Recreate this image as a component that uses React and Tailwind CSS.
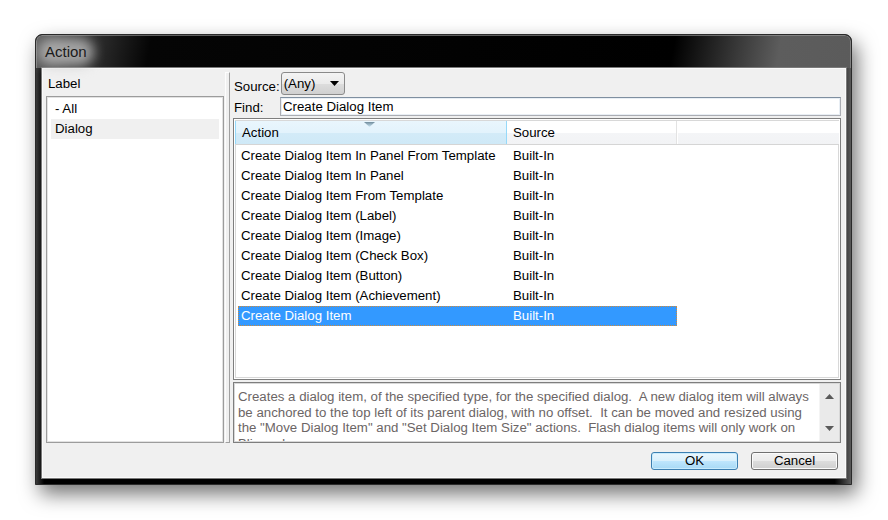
import React from 'react';

const ACTIONS = [
  'Create Dialog Item In Panel From Template',
  'Create Dialog Item In Panel',
  'Create Dialog Item From Template',
  'Create Dialog Item (Label)',
  'Create Dialog Item (Image)',
  'Create Dialog Item (Check Box)',
  'Create Dialog Item (Button)',
  'Create Dialog Item (Achievement)',
  'Create Dialog Item',
];

const DESCRIPTION = [
  'Creates a dialog item, of the specified type, for the specified dialog.  A new dialog item will always',
  'be anchored to the top left of its parent dialog, with no offset.  It can be moved and resized using',
  'the "Move Dialog Item" and "Set Dialog Item Size" actions.  Flash dialog items will only work on',
  'Blizzard.',
];

function ArrowUp() {
  return (
    <svg width="9" height="5" viewBox="0 0 9 5">
      <path d="M0 5 L4.5 0 L9 5 Z" fill="#5a5a5a" />
    </svg>
  );
}

function ArrowDown() {
  return (
    <svg width="9" height="5" viewBox="0 0 9 5">
      <path d="M0 0 L9 0 L4.5 5 Z" fill="#5a5a5a" />
    </svg>
  );
}

export default function App() {
  return (
    <div className="w-[888px] h-[520px] bg-white pt-[34px] pl-[35px] font-['Liberation_Sans',Arial,sans-serif] text-[13.25px] text-black">
      <div className="w-[817px] h-[451px] flex flex-col rounded-t-[7px] border border-[#2a2a2a] bg-[#0a0a0a] shadow-[5px_9px_20px_rgba(0,0,0,0.55)] overflow-hidden">
        {/* Title bar */}
        <div className="h-[33px] shrink-0 flex items-center pl-[8px] rounded-t-[6px] border-t border-l border-r border-[#9a9a9a]/60 bg-[linear-gradient(100deg,#5e5e5e_0%,#3c3c3c_5%,#050505_14%,#000_78%,#3a3a3a_86%,#5d5d5d_91%,#5b5b5b_100%)]">
          <span className="relative">
            <span className="absolute -inset-x-[7px] -inset-y-[3px] rounded-full bg-[#c4c4c4]/75 blur-[6px]" />
            <span className="relative text-[15px] text-[#1a1a1a]">Action</span>
          </span>
        </div>

        {/* Frame body */}
        <div className="flex-1 flex pl-[6px] pr-[5px] pb-[6px] bg-[linear-gradient(90deg,#3a3a3a_0%,#000_1%,#000_98%,#5a5a5a_100%)]">
          <div className="flex-1 flex flex-col bg-[#f0f0f0] border border-[#fafafa] shadow-[0_0_0_1px_#7a7a7a]">
            {/* Main split */}
            <div className="h-[374px] flex pt-[3px] pl-[3px] pr-[4px]">
              {/* Left pane */}
              <div className="w-[178px] flex flex-col">
                <div className="h-[24px] flex items-center pl-[2px]">Label</div>
                <div className="flex-1 bg-white border border-[#9c9c9c] shadow-[inset_0_0_0_1px_#e2e2e2] pt-[2px] px-[4px]">
                  <div className="h-[20px] flex items-center pl-[4px]">- All</div>
                  <div className="h-[20px] flex items-center pl-[4px] bg-[#f0f0f0]">Dialog</div>
                </div>
              </div>

              {/* Splitter */}
              <div className="ml-[1px] w-[5px] h-[371px] bg-[#f0f0f0] border border-[#a0a0a0] border-t-[#fdfdfd] border-l-[#fdfdfd]" />

              {/* Right pane */}
              <div className="ml-[3px] w-[608px] flex flex-col">
                <div className="h-[24px] flex items-start pl-[1px]">
                  <span className="mt-[5px]">Source:</span>
                  <div className="ml-[1px] w-[64px] h-[23px] flex items-center justify-between pl-[2px] pr-[5px] rounded-[3px] border border-[#8a8a8a] bg-[linear-gradient(180deg,#f4f4f4_0%,#ebebeb_50%,#dddddd_51%,#d0d0d0_100%)]">
                    <span>(Any)</span>
                    <svg width="9" height="5" viewBox="0 0 9 5">
                      <path d="M0 0 L9 0 L4.5 5 Z" fill="#000" />
                    </svg>
                  </div>
                </div>
                <div className="h-[21px] flex items-start pl-[1px]">
                  <span className="mt-[2px] w-[46px]">Find:</span>
                  <div className="mt-[1px] flex-1 h-[19px] flex items-center pl-[2px] bg-white border border-[#abadb3] border-t-[#7f8fa0] shadow-[inset_0_0_0_1px_#e8eef4]">
                    Create Dialog Item
                  </div>
                </div>

                {/* Grid */}
                <div className="mt-[1px] h-[262px] flex flex-col bg-white border border-[#7e7e7e] shadow-[inset_0_0_0_1px_#fff,inset_0_0_0_2px_#d8d8d8] px-[1px] pt-[2px]">
                  <div className="h-[24px] flex shrink-0 border-b border-[#d5d5d5]">
                    <div className="relative w-[272px] flex items-center pl-[6px] border-l border-r border-[#96d9f9] bg-[linear-gradient(180deg,#e9f6fd_0%,#e3f3fc_50%,#d3ebf8_51%,#cfe9f7_100%)]">
                      Action
                      <svg className="absolute left-[128px] top-[1px]" width="11" height="5" viewBox="0 0 11 5">
                        <defs>
                          <linearGradient id="sortArrow" x1="0" y1="0" x2="0" y2="1">
                            <stop offset="0" stopColor="#3c5e72" />
                            <stop offset="1" stopColor="#c4e3f3" />
                          </linearGradient>
                        </defs>
                        <path d="M0 0 L11 0 L5.5 5 Z" fill="url(#sortArrow)" opacity="0.7" />
                      </svg>
                    </div>
                    <div className="w-[170px] flex items-center pl-[6px] border-r border-[#e3e3e3] bg-[linear-gradient(180deg,#ffffff_0%,#ffffff_50%,#f4f5f7_51%,#f2f3f5_100%)]">
                      Source
                    </div>
                    <div className="flex-1 border-l border-white bg-[linear-gradient(180deg,#ffffff_0%,#ffffff_50%,#f4f5f7_51%,#f2f3f5_100%)]" />
                  </div>
                  <div className="flex flex-col pl-[3px] pt-[1px]">
                    {ACTIONS.map((a, i) => {
                      const selected = i === ACTIONS.length - 1;
                      return (
                        <div
                          key={a}
                          className={`w-[439px] h-[20px] flex items-center ${selected ? 'bg-[#3399ff] text-white border border-dotted border-[#d08a3a]' : ''}`}
                        >
                          <span className={`w-[269px] ${selected ? 'pl-[2px]' : 'pl-[3px]'}`}>{a}</span>
                          <span className={selected ? 'pl-[5px]' : 'pl-[6px]'}>Built-In</span>
                        </div>
                      );
                    })}
                  </div>
                </div>

                {/* Description */}
                <div className="mt-[2px] h-[61px] flex bg-white border border-[#7e7e7e] shadow-[inset_0_0_0_1px_#d8d8d8] p-[1px] overflow-hidden">
                  <div className="flex-1 pl-[3px] pt-[5px] text-[#6b6565] leading-[15.5px] whitespace-pre overflow-hidden">
                    {DESCRIPTION.map((line) => (
                      <div key={line}>{line}</div>
                    ))}
                  </div>
                  <div className="w-[20px] flex flex-col items-center justify-between py-[10px] bg-[#eaeaea] border-l border-[#f4f4f4]">
                    <ArrowUp />
                    <ArrowDown />
                  </div>
                </div>
              </div>
            </div>

            {/* Buttons */}
            <div className="flex-1 flex justify-end items-start pt-[9px] pr-[7px] gap-[13px]">
              <button className="w-[87px] h-[18px] flex items-center justify-center rounded-[3px] border border-[#3c7fb1] shadow-[inset_0_0_0_1px_#c9ecfd] bg-[linear-gradient(180deg,#eaf6fd_0%,#d9f0fc_50%,#bee6fd_51%,#a7d9f5_100%)] leading-none">
                OK
              </button>
              <button className="w-[87px] h-[18px] flex items-center justify-center rounded-[3px] border border-[#707070] shadow-[inset_0_0_0_1px_#fbfbfb] bg-[linear-gradient(180deg,#f2f2f2_0%,#ebebeb_50%,#dddddd_51%,#cfcfcf_100%)] leading-none">
                Cancel
              </button>
            </div>
          </div>
        </div>
      </div>
    </div>
  );
}
